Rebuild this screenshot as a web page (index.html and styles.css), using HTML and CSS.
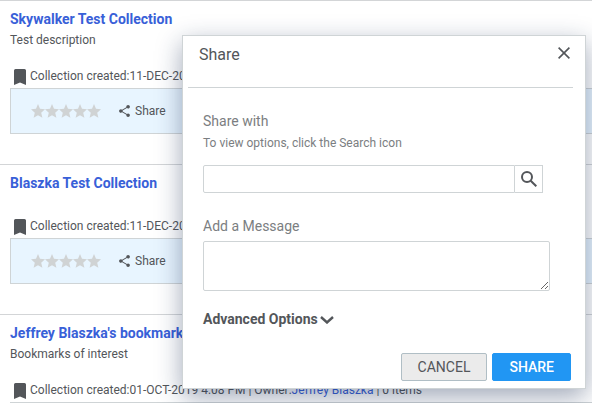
FILE: index.html
```html
<!DOCTYPE html>
<html lang="en">
<head>
<meta charset="utf-8">
<title>Collections</title>
<link rel="stylesheet" href="styles.css">
</head>
<body>
<svg class="defs" aria-hidden="true">
  <symbol id="bookmark" viewBox="0 0 12 16"><path d="M1.500 0h9Q12 0 12 1.500V16L6 13.500 0 16V1.500Q0 0 1.500 0z"/></symbol>
  <symbol id="stars" viewBox="0 0 70 14">
    <path id="star" d="M7 0l2 4.700 5 .6-3.800 3.400 1.200 5L7 11.200l-4.400 2.500 1.200-5L0 5.300l5-.6z"/>
    <use href="#star" x="14"/><use href="#star" x="28"/><use href="#star" x="42"/><use href="#star" x="56"/>
  </symbol>
  <symbol id="share" viewBox="3 2 18 20"><path d="M18 16.080c-.76 0-1.440.3-1.960.77L8.910 12.700c.05-.23.09-.46.09-.7s-.04-.47-.09-.7l7.050-4.110c.54.5 1.250.81 2.040.81 1.660 0 3-1.340 3-3s-1.340-3-3-3-3 1.340-3 3c0 .24.04.47.09.7L8.040 9.810C7.500 9.310 6.790 9 6 9c-1.660 0-3 1.340-3 3s1.340 3 3 3c.79 0 1.500-.31 2.040-.81l7.120 4.160c-.05.21-.08.43-.08.65 0 1.610 1.310 2.920 2.920 2.920s2.920-1.310 2.920-2.920-1.310-2.920-2.920-2.920z"/></symbol>
</svg>

<main class="collections">
  <article class="collection">
    <h2 class="collection-title"><a href="#">Skywalker Test Collection</a></h2>
    <p class="collection-text">Test description</p>
    <div class="meta">
      <svg class="bookmark" aria-hidden="true"><use href="#bookmark"/></svg>
      <span>Collection created:11-DEC-20</span>
    </div>
    <div class="actions">
      <svg class="stars" role="img" aria-label="Not rated"><use href="#stars"/></svg>
      <button class="share-link" type="button"><svg class="share-icon" aria-hidden="true"><use href="#share"/></svg>Share</button>
    </div>
  </article>

  <article class="collection">
    <h2 class="collection-title"><a href="#">Blaszka Test Collection</a></h2>
    <div class="meta">
      <svg class="bookmark" aria-hidden="true"><use href="#bookmark"/></svg>
      <span>Collection created:11-DEC-20</span>
    </div>
    <div class="actions">
      <svg class="stars" role="img" aria-label="Not rated"><use href="#stars"/></svg>
      <button class="share-link" type="button"><svg class="share-icon" aria-hidden="true"><use href="#share"/></svg>Share</button>
    </div>
  </article>

  <article class="collection">
    <h2 class="collection-title"><a href="#">Jeffrey Blaszka's bookmark</a></h2>
    <p class="collection-text">Bookmarks of interest</p>
    <div class="meta">
      <svg class="bookmark" aria-hidden="true"><use href="#bookmark"/></svg>
      <span>Collection created:01-OCT-2019 4:08 PM | Owner:<a href="#">Jeffrey Blaszka</a> | 0 items</span>
    </div>
    <div class="actions"></div>
  </article>
</main>

<section class="dialog" role="dialog" aria-labelledby="dialog-title">
  <header class="dialog-header">
    <h1 class="dialog-title" id="dialog-title">Share</h1>
    <button class="close" type="button" aria-label="Close">
      <svg class="close-icon" viewBox="0 0 12 12" aria-hidden="true"><path d="M.6.600l10.800 10.800M11.400.600L.600 11.400"/></svg>
    </button>
  </header>
  <form class="dialog-form">
    <label class="label" for="share-with">Share with</label>
    <p class="hint" id="share-hint">To view options, click the Search icon</p>
    <div class="search">
      <input class="search-input" id="share-with" type="text" aria-describedby="share-hint">
      <button class="search-button" type="button" aria-label="Search">
        <svg class="search-icon" viewBox="0 0 16 16" aria-hidden="true"><circle cx="6" cy="6" r="5"/><path d="M9.700 9.700l5.600 5.600"/></svg>
      </button>
    </div>
    <label class="label" for="message">Add a Message</label>
    <textarea class="message" id="message"></textarea>
    <button class="advanced" type="button">Advanced Options
      <svg class="chevron" viewBox="0 0 14 8" aria-hidden="true"><path d="M1 1l6 5.500L13 1"/></svg>
    </button>
    <div class="buttons">
      <button class="button" type="button">CANCEL</button>
      <button class="button primary" type="submit">SHARE</button>
    </div>
  </form>
</section>
</body>
</html>
```

FILE: styles.css
```css
* {
  box-sizing: border-box;
}

body {
  margin: 0;
  height: 100vh;
  overflow: hidden;
  background: #fff;
  color: #53565a;
  font: 12px/20px Roboto, sans-serif;
}

h1, h2, p {
  margin: 0;
}

button {
  padding: 0;
  border: 0;
  background: none;
  color: inherit;
  font: inherit;
}

a {
  color: #3860d8;
  text-decoration: none;
}

.defs {
  position: absolute;
  width: 0;
  height: 0;
}

.collection {
  padding: 8px 0 30px 10px;
  border-top: 1px solid #d3d5d7;
}

.collection-title {
  padding-bottom: 4px;
  font-size: 14px;
  font-weight: 700;
}

.collection-text {
  line-height: 14px;
}

.meta {
  display: flex;
  align-items: center;
  gap: 4px;
  margin: 19px 0 2px;
  padding-left: 4px;
}

.bookmark {
  width: 12px;
  height: 16px;
  margin-top: 2px;
  fill: #53565a;
}

.actions {
  display: flex;
  align-items: center;
  gap: 18px;
  height: 46px;
  padding-left: 20px;
  border: 1px solid #cfd4d6;
  border-right: 0;
  background: #e8f5ff;
}

.stars {
  width: 70px;
  height: 14px;
  fill: #d0d3d4;
}

.share-link {
  display: flex;
  align-items: center;
  gap: 5px;
}

.share-icon {
  width: 11px;
  height: 12px;
  fill: #53565a;
}

.dialog {
  position: absolute;
  top: 35px;
  right: 6px;
  left: 182px;
  border: 1px solid #cfd4d6;
  background: #fff;
  box-shadow: 0 8px 24px rgba(20, 40, 80, 0.4);
}

.dialog-header {
  display: flex;
  align-items: center;
  justify-content: space-between;
  margin: 0 12px 0 5px;
  padding: 8px 0 22px 11px;
  border-bottom: 1px solid #cfd4d6;
}

.dialog-title {
  font-size: 16px;
  font-weight: 400;
  line-height: 21px;
}

.close {
  display: flex;
  padding: 0 3px 3px;
}

.close-icon {
  width: 12px;
  height: 12px;
  fill: none;
  stroke: #53565a;
  stroke-width: 1.6;
}

.dialog-form {
  display: flex;
  flex-direction: column;
  padding: 23px 14px 7px 20px;
}

.label {
  color: #7b7e81;
  font-size: 14px;
}

.hint {
  margin: 2px 0 12px;
  color: #7b7e81;
}

.search {
  display: flex;
  height: 28px;
  margin: 0 28px 23px 0;
}

.search-input {
  flex: 1;
  min-width: 0;
  padding: 0 8px;
  border: 1px solid #cfd4d6;
  border-radius: 2px 0 0 2px;
  font: inherit;
}

.search-button {
  display: flex;
  align-items: center;
  justify-content: center;
  width: 28px;
  border: 1px solid #cfd4d6;
  border-left: 0;
}

.search-icon {
  width: 16px;
  height: 16px;
  fill: none;
  stroke: #53565a;
  stroke-width: 2;
}

.message {
  height: 50px;
  margin: 5px 21px 18px 0;
  padding: 4px 8px;
  border: 1px solid #cfd4d6;
  border-radius: 2px;
  font: inherit;
}

.advanced {
  display: flex;
  align-items: center;
  align-self: flex-start;
  gap: 2px;
  font-size: 14px;
  font-weight: 700;
}

.chevron {
  width: 14px;
  height: 8px;
  margin-top: 2px;
  fill: none;
  stroke: #53565a;
  stroke-width: 2.4;
}

.buttons {
  display: flex;
  justify-content: flex-end;
  gap: 5px;
  margin-top: 24px;
}

.button {
  padding: 3px 16px;
  border: 1px solid #b0bec5;
  border-radius: 2px;
  background: #ebebeb;
  font-size: 14px;
}

.primary {
  border-color: #2196f3;
  background: #2196f3;
  color: #fff;
  font-weight: 500;
}
```
